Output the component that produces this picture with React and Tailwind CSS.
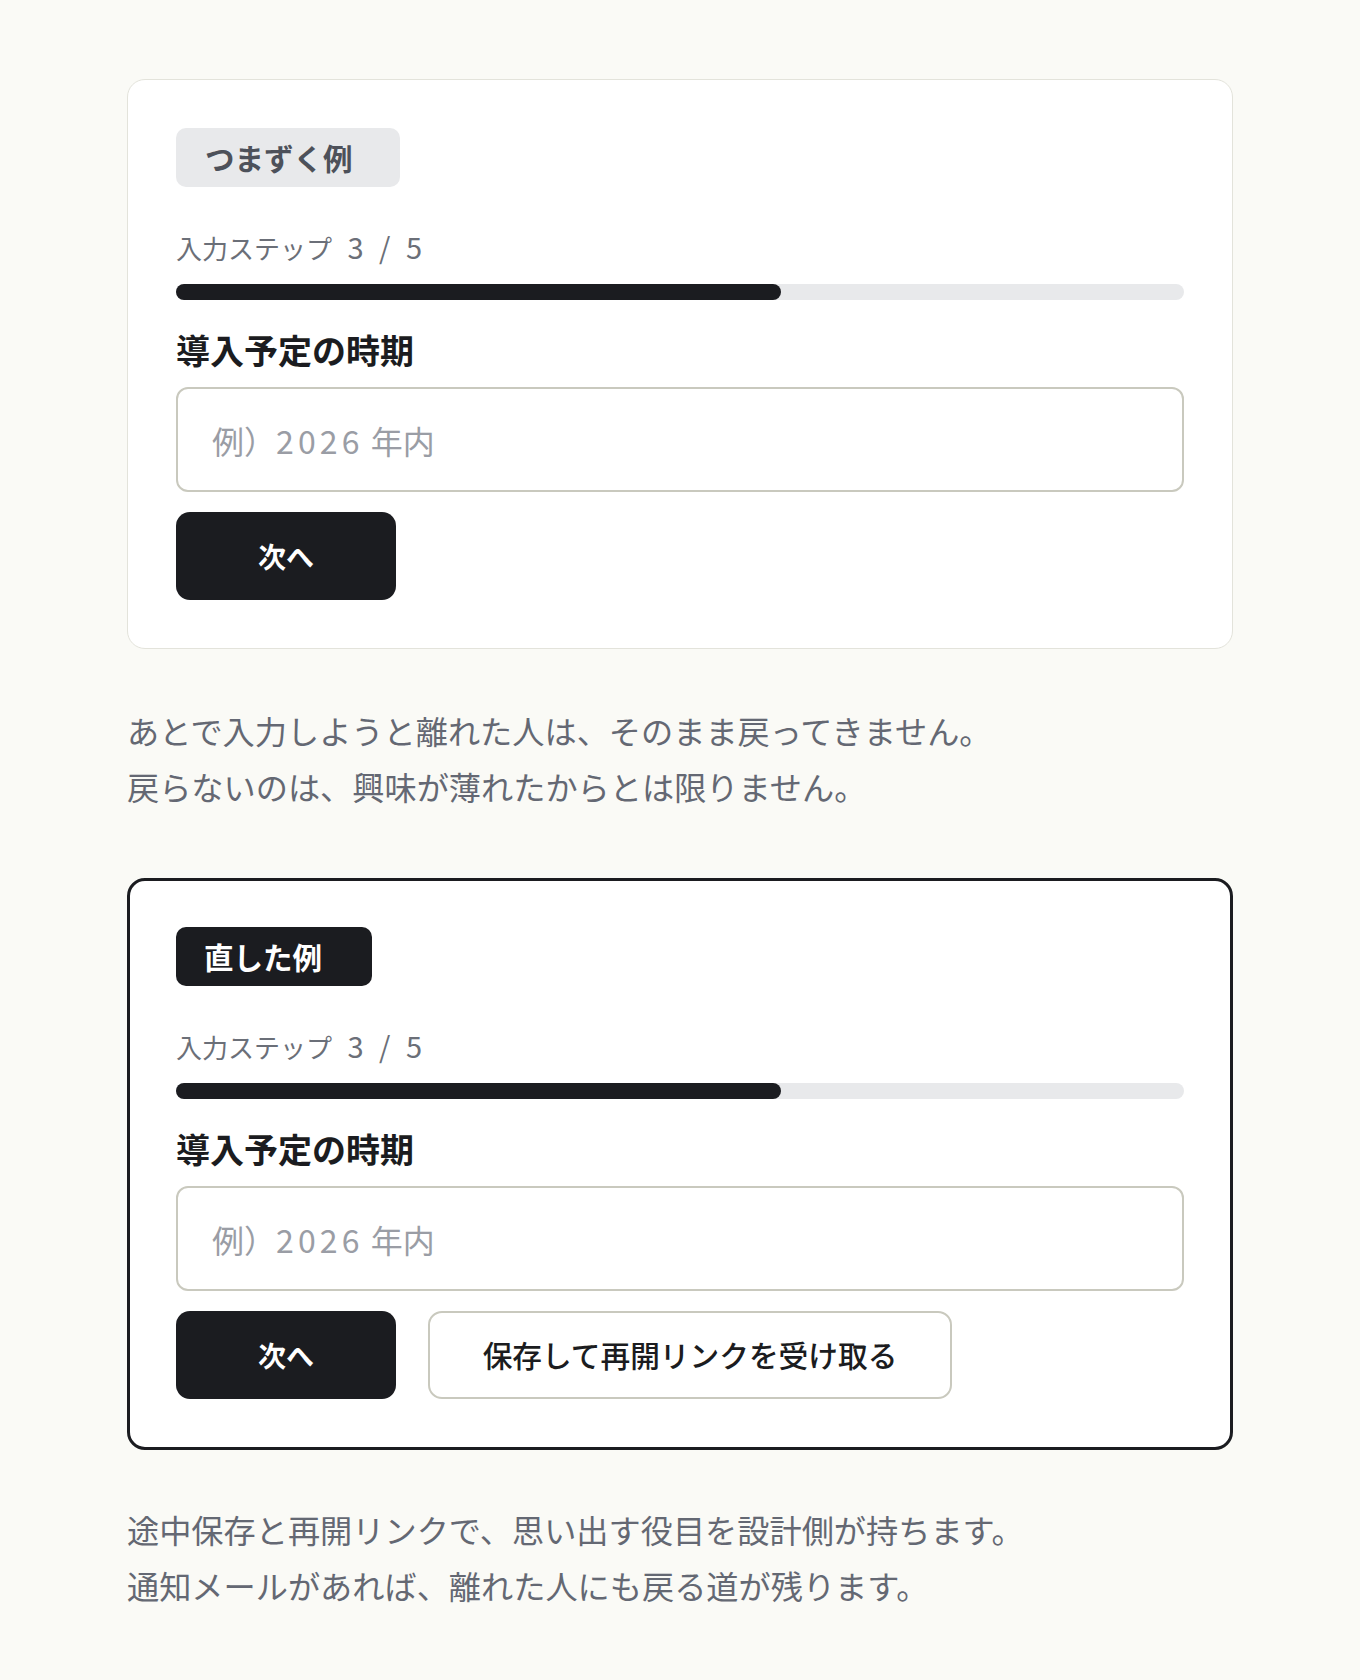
import React from 'react';

const font = { fontFamily: '"Noto Sans CJK JP", "Noto Sans", sans-serif' };

function StepForm({ badge, fixed }) {
  return (
    <div
      className={
        fixed
          ? 'rounded-[18px] border-[3px] border-[#1b1c20] bg-white px-[46px] pt-[46px] pb-[48px]'
          : 'rounded-[18px] border border-[#e3e3db] bg-white p-[48px]'
      }
    >
      <div className="flex">
        <span
          className={
            fixed
              ? 'flex h-[59px] items-center rounded-[10px] bg-[#1b1c20] pl-[28px] pr-[50px] text-[29.5px] font-bold text-white'
              : 'flex h-[59px] items-center rounded-[10px] bg-[#e8e9eb] pl-[29px] pr-[47px] text-[29.5px] font-bold text-[#4d515a]'
          }
        >
          {badge}
        </span>
      </div>

      <div className="mt-[43px] text-[26px] leading-[36px] text-[#6b6f78]">
        入力ステップ<span className="text-[29px] leading-none [word-spacing:9px]"> 3 / 5</span>
      </div>

      <div className="mt-[18px] h-[16px] w-full rounded-full bg-[#e8e9eb]">
        <div className="h-full w-3/5 rounded-full bg-[#1b1c20]" />
      </div>

      <div className="mt-[28px] text-[34px] font-bold leading-[44px] text-[#1b1c20]">導入予定の時期</div>

      <div className="mt-[15px] flex h-[105px] items-center rounded-[12px] border-2 border-[#c9c9be] px-[34px] text-[32px] text-[#9a9da5]">
        例）<span className="tracking-[0.13em]">2026</span>&nbsp;年内
      </div>

      <div className="mt-[20px] flex gap-[32px]">
        <button className="flex h-[88px] w-[220px] items-center justify-center rounded-[14px] bg-[#1b1c20] text-[28px] font-bold text-white">
          次へ
        </button>
        {fixed && (
          <button className="flex h-[88px] w-[524px] items-center justify-center rounded-[14px] border-2 border-[#c9c9be] bg-white text-[29.7px] font-medium text-[#1b1c20]">
            保存して再開リンクを受け取る
          </button>
        )}
      </div>
    </div>
  );
}

export default function App() {
  return (
    <div className="min-h-screen bg-[#fafaf6] pt-[79px] pb-[64px]" style={font}>
      <div className="mx-auto w-[1106px]">
        <StepForm badge="つまずく例" />

        <p className="mt-[53px] text-[32.2px] leading-[56px] text-[#646873]">
          あとで入力しようと離れた人は、そのまま戻ってきません。
          <br />
          戻らないのは、興味が薄れたからとは限りません。
        </p>

        <div className="mt-[64px]">
          <StepForm badge="直した例" fixed />
        </div>

        <p className="mt-[51px] text-[32.2px] leading-[56px] text-[#646873]">
          途中保存と再開リンクで、思い出す役目を設計側が持ちます。
          <br />
          通知メールがあれば、離れた人にも戻る道が残ります。
        </p>
      </div>
    </div>
  );
}
